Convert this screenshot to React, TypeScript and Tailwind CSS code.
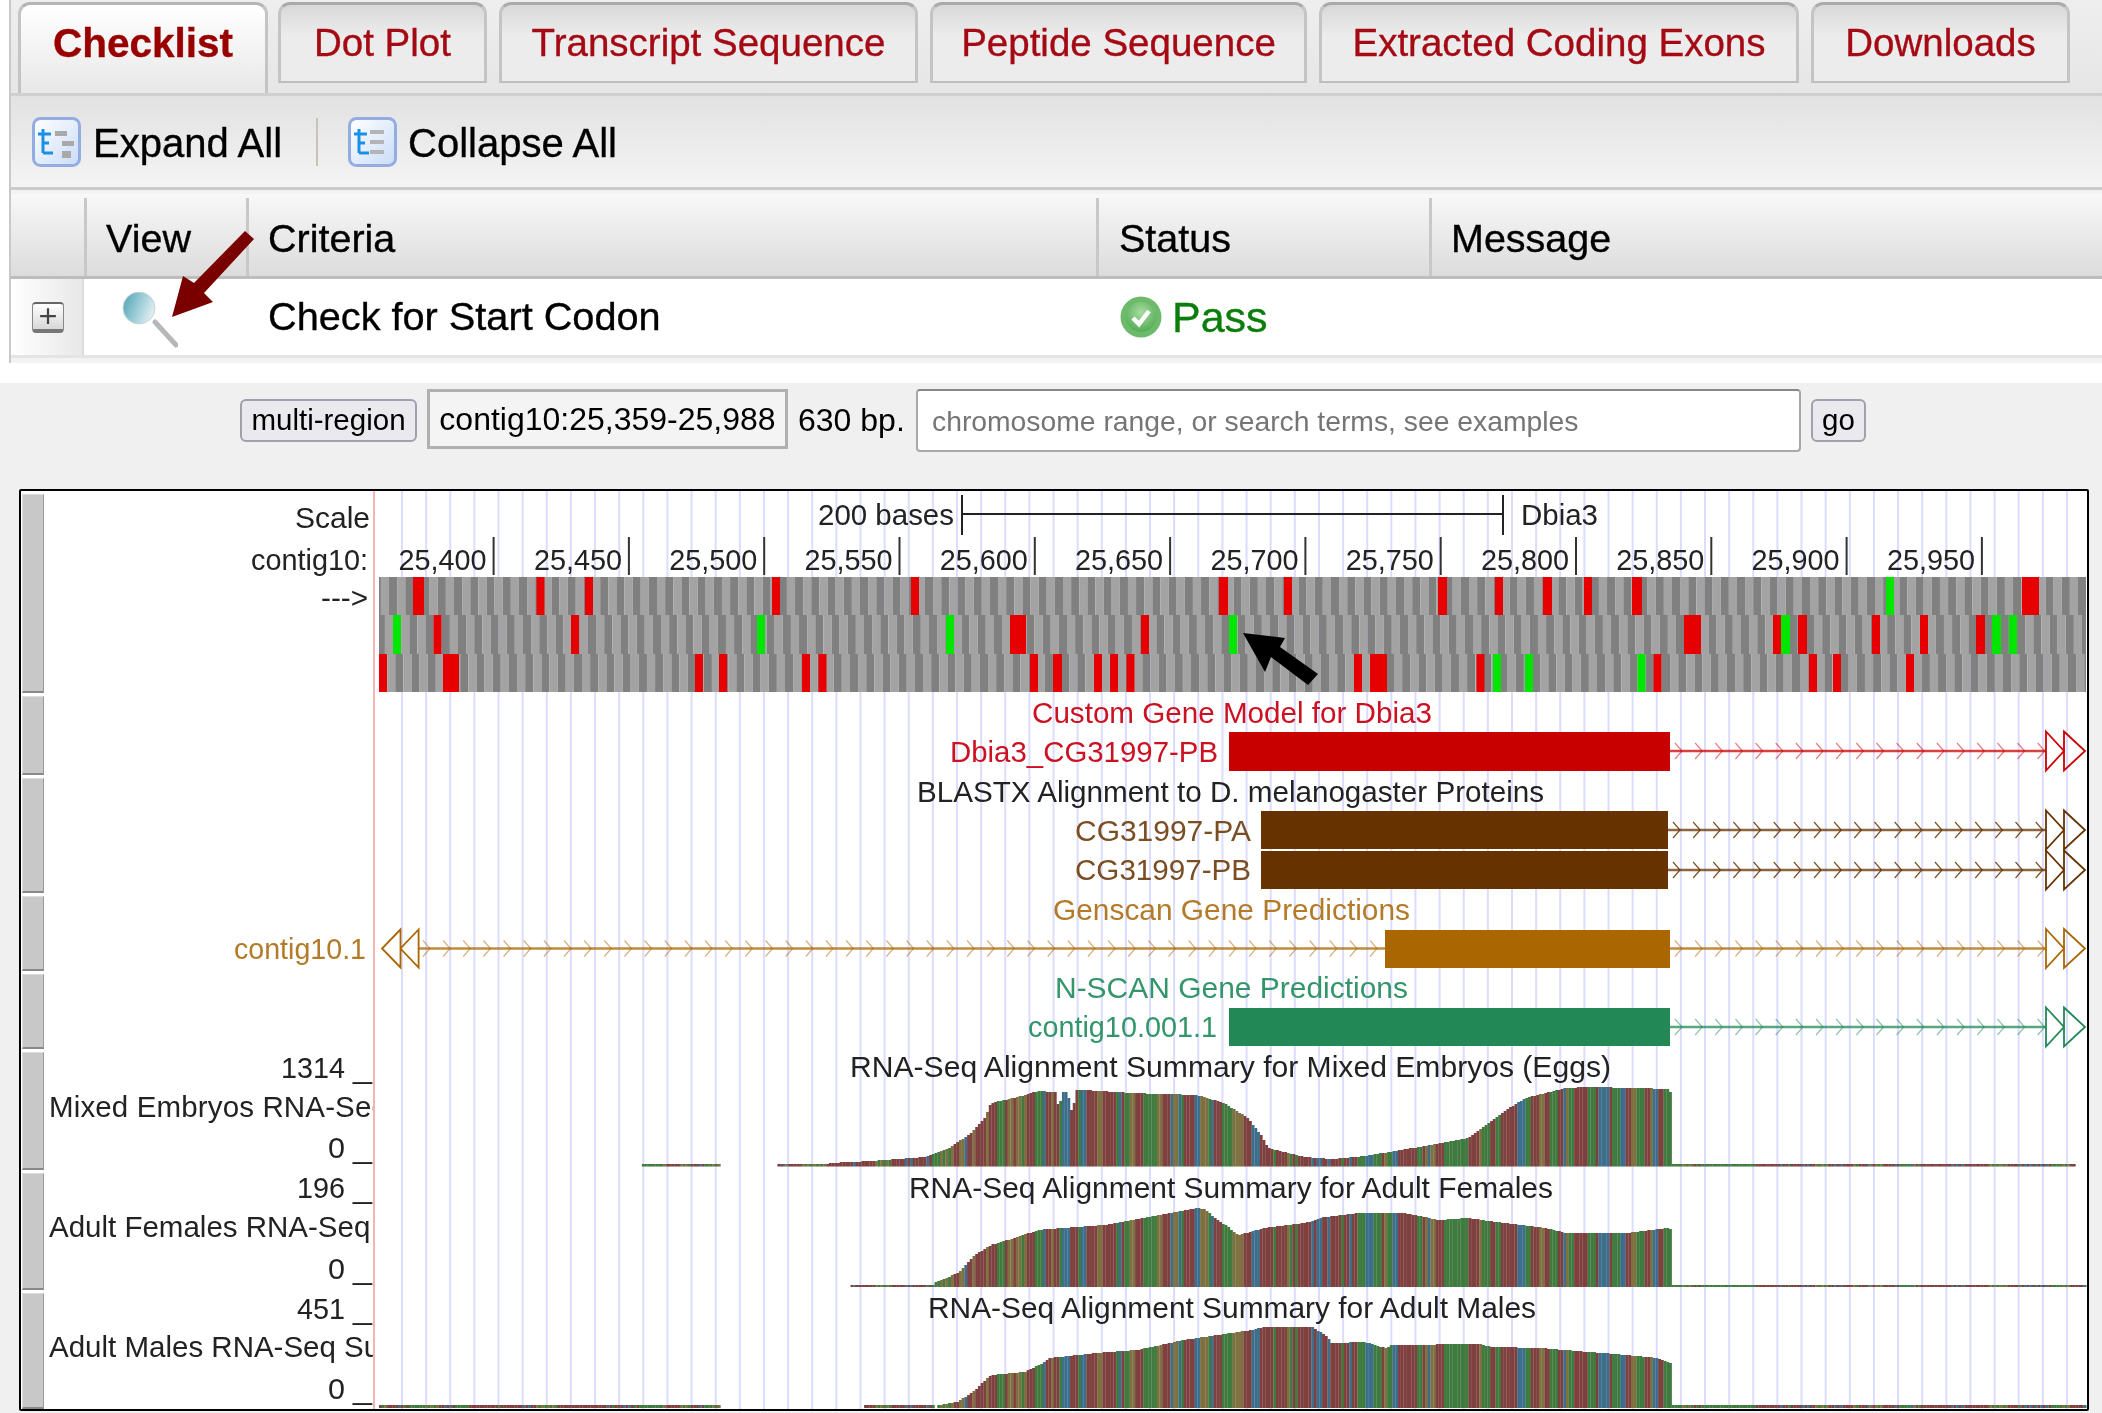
import React from "react";

const SIDE_BUTTONS = [199, 79, 115, 75, 75, 118, 117, 116];

const TABS = [
  { label: "Dot Plot", width: "w-[209px]" },
  { label: "Transcript Sequence", width: "w-[419px]" },
  { label: "Peptide Sequence", width: "w-[377px]" },
  { label: "Extracted Coding Exons", width: "w-[480px]" },
  { label: "Downloads", width: "w-[259px]" },
];

// red / green stop codons per reading frame, page pixels
const RED = "#e60000";
const GREEN = "#00e600";
const FRAMES = [
  {
    y: 577,
    h: 38,
    start: 372.8,
    marks: [
      [413, 11, RED], [536.5, 8, RED], [585, 8, RED], [772, 8, RED], [911, 8, RED],
      [1219, 9, RED], [1284, 8, RED], [1438, 9, RED], [1495, 8, RED], [1543, 9, RED],
      [1584, 8, RED], [1632, 10, RED], [1886, 8, GREEN], [2022, 17, RED],
    ],
  },
  {
    y: 615,
    h: 39,
    start: 376.8,
    marks: [
      [393, 8, GREEN], [433.5, 8, RED], [571, 8, RED], [757, 8, GREEN], [946, 8, GREEN],
      [1010, 16, RED], [1141, 8, RED], [1229, 8, GREEN], [1684, 17, RED], [1773, 8, RED],
      [1781, 9, GREEN], [1798, 9, RED], [1872, 8, RED], [1920, 8, RED], [1976, 9, RED],
      [1992, 9, GREEN], [2009, 8, GREEN],
    ],
  },
  {
    y: 654,
    h: 38,
    start: 379,
    marks: [
      [379, 8, RED], [443, 16, RED], [695, 8, RED], [719, 8, RED], [802, 8, RED],
      [818.5, 8, RED], [1030, 8, RED], [1053, 9, RED], [1094, 8, RED], [1110, 8, RED],
      [1126.5, 8, RED], [1354, 8, RED], [1370, 17, RED], [1476.5, 8, RED], [1493, 8, GREEN],
      [1525, 8, GREEN], [1637.5, 8, GREEN], [1653.5, 8, RED], [1809, 8, RED], [1833, 8, RED],
      [1906, 8, RED],
    ],
  },
] as { y: number; h: number; start: number; marks: [number, number, string][] }[];

type Pt = [number, number];

const COVERAGE: { base: number; segments: Pt[][] }[] = [
  {
    base: 1166.5,
    segments: [
      [[643, 1164], [720, 1164]],
      [[777, 1164], [830, 1164]],
      [
        [830, 1163], [871, 1161], [924, 1157], [951, 1147], [971, 1133], [985, 1118], [991, 1103],
        [1018, 1097], [1038, 1091], [1056, 1092], [1059, 1111], [1062, 1092], [1068, 1092], [1070, 1110],
        [1073, 1110], [1076, 1090], [1084, 1090], [1117, 1092], [1130, 1093], [1197, 1095], [1224, 1103],
        [1248, 1118], [1261, 1135], [1268, 1148], [1305, 1157], [1332, 1159], [1365, 1156], [1419, 1147],
        [1469, 1138], [1506, 1110], [1526, 1098], [1566, 1088], [1586, 1087], [1640, 1088], [1667, 1089], [1672, 1093],
      ],
      [[1673, 1164], [2075, 1164]],
    ],
  },
  {
    base: 1287,
    segments: [
      [[851, 1285], [934, 1285]],
      [
        [934, 1283], [958, 1273], [975, 1255], [991, 1245], [1018, 1237], [1038, 1230], [1050, 1229],
        [1104, 1225], [1150, 1217], [1197, 1208], [1205, 1209], [1214, 1217], [1228, 1227], [1238, 1235],
        [1265, 1228], [1305, 1223], [1325, 1217], [1358, 1213], [1405, 1213], [1439, 1220], [1466, 1218],
        [1506, 1223], [1546, 1228], [1566, 1233], [1627, 1233], [1667, 1228], [1672, 1230],
      ],
      [[1673, 1285], [2087, 1285]],
    ],
  },
  {
    base: 1408,
    segments: [
      [[379, 1405], [720, 1405]],
      [[864, 1405], [934, 1405]],
      [
        [938, 1405], [958, 1402], [975, 1390], [991, 1375], [1025, 1372], [1045, 1362], [1050, 1358],
        [1097, 1353], [1137, 1350], [1184, 1340], [1251, 1330], [1265, 1327], [1312, 1327], [1325, 1335],
        [1332, 1343], [1365, 1342], [1385, 1348], [1392, 1345], [1479, 1344], [1493, 1347], [1540, 1348],
        [1627, 1355], [1657, 1358], [1672, 1364],
      ],
      [[1673, 1405], [2087, 1405]],
    ],
  },
];

const BASE_STEP = 2.71;
const BASE_COLORS: Record<string, string> = { R: "#7f4140", G: "#3f7a3e", B: "#3d6f8c", Y: "#7e7040" };

// base stripes read off the reference: end of run (in px from 960 / 1320) + base
const RUNS_A =
  "5Y 7B 12R 15Y 22R 23G 27R 29Y 36R 44G 47R 52Y 55R 61Y 64G 68Y 74R 84G 86B 92R 94Y 99R 102G 109B 117R 121G 125B 138R 142Y 155R 159G 162B 164R 169G 176Y 184R 197G 202Y 210R 213B 219Y 221B 225G 235R 239B 247Y 251G 255B 263R 274G 284Y 291R 299B 312R 317G 327R 330Y 333G 336R 339G 350R 353B 358R 361B 367R 369B 380R";
const RUNS_B =
  "3B 6G 9B 22R 25G 30R 33B 38R 45G 53B 62G 65R 68Y 72G 78B 97R 101G 105R 109Y 111B 117Y 124R 131G 133B 148G 153R 155Y 159R 163Y 171G 176R 181G 196R 204B 210G 220R 225Y 229R 238G 242R 246B 250Y 254G 267R 277G 279R 288B 292R 300G 306B 312R 317Y 324G 329R 332Y 339B 343R 352G";

function parseRuns(runs: string, origin: number) {
  return runs.split(" ").map((run) => ({
    end: origin + parseInt(run, 10),
    color: BASE_COLORS[run[run.length - 1]],
  }));
}

const STRIPES = [...parseRuns(RUNS_A, 960), ...parseRuns(RUNS_B, 1320)];

// flat parts of the tracks are just a noisy mix of the four bases
function makeNoise() {
  const colors: string[] = [];
  const letters = ["R", "G", "R", "B", "R", "Y", "G", "R"];
  let seed = 4711;
  for (let i = 0; i < 640; i++) {
    seed = (seed * 1103515245 + 12345) & 0x7fffffff;
    colors.push(BASE_COLORS[letters[(seed >> 8) % letters.length]]);
  }
  return colors;
}

const NOISE = makeNoise();

function baseColor(x: number) {
  if (x >= 960 && x < 1672) {
    const stripe = STRIPES.find((s) => x < s.end);
    if (stripe) return stripe.color;
  }
  return NOISE[Math.floor((x - 379) / BASE_STEP)];
}

function heightAt(points: Pt[], x: number) {
  for (let i = 1; i < points.length; i++) {
    if (x <= points[i][0]) {
      const [x0, y0] = points[i - 1];
      const [x1, y1] = points[i];
      return y0 + ((y1 - y0) * (x - x0)) / (x1 - x0 || 1);
    }
  }
  return points[points.length - 1][1];
}

const T: React.FC<{
  x: number;
  y: number;
  w?: number;
  fill?: string;
  clip?: boolean;
  className?: string;
  children: React.ReactNode;
}> = ({ x, y, w, fill = "#222", clip, className, children }) => (
  <text
    x={x}
    y={y}
    fill={fill}
    className={className}
    textLength={w}
    lengthAdjust={w ? "spacingAndGlyphs" : undefined}
    clipPath={clip ? "url(#labels)" : undefined}
  >
    {children}
  </text>
);

const GeneLine: React.FC<{ y: number; from: number; to: number; color: string; soft?: boolean; arrows?: boolean }> = ({
  y,
  from,
  to,
  color,
  soft,
  arrows = true,
}) => {
  const chevrons: number[] = [];
  for (let x = from + 8; x < to - 4; x += 20.15) chevrons.push(x);
  const h = 19.5;
  return (
    <g fill="none" stroke={color}>
      <path d={`M${from} ${y}H${to}`} strokeWidth="2.5" opacity="0.75" />
      {chevrons.map((x) => (
        <path
          key={x}
          d={`M${x - 3} ${y - 8}L${x + 4} ${y}L${x - 3} ${y + 8}`}
          strokeWidth="1.2"
          opacity={soft ? 0.5 : 0.85}
        />
      ))}
      {arrows && (
        <>
          <path d={`M2046 ${y - h}L2064 ${y}L2046 ${y + h}Z`} strokeWidth="1.8" />
          <path d={`M2064 ${y - h}L2085 ${y}L2064 ${y + h}Z`} strokeWidth="1.8" />
        </>
      )}
    </g>
  );
};

const TrackCanvas: React.FC = () => {
  const grid: number[] = [];
  for (let x = 402; x < 2087; x += 24.13) grid.push(x);
  const ticks = ["25,400", "25,450", "25,500", "25,550", "25,600", "25,650", "25,700", "25,750", "25,800", "25,850", "25,900", "25,950"];

  return (
    <svg viewBox="46 491 2041 918" className="w-[2041px] h-[918px] shrink-0 bg-white text-[29.5px]">
      <defs>
        <clipPath id="labels">
          <rect x="46" y="491" width="327" height="918" />
        </clipPath>
      </defs>

      {grid.map((x) => (
        <rect key={x} x={x - 1} y="491" width="2" height="918" fill="#dcdcff" />
      ))}
      <rect x="373" y="491" width="2" height="918" fill="#f4b4b4" />

      {/* scale and ruler */}
      <T x={295} y={528} w={75}>Scale</T>
      <T x={818} y={525} w={136}>200 bases</T>
      <path d="M962 495V535M962 514H1503M1503 495V535" stroke="#222" strokeWidth="2" fill="none" />
      <T x={1521} y={525} w={77}>Dbia3</T>
      <T x={251} y={570} w={117}>contig10:</T>
      {ticks.map((label, i) => {
        const tick = 493.6 + 135.3 * i;
        return (
          <g key={label}>
            <T x={tick - 95} y={569.5} w={88}>{label}</T>
            <rect x={tick - 1} y="537" width="2" height="38" fill="#333" />
          </g>
        );
      })}
      <T x={321} y={608} w={47}>---&gt;</T>

      {/* three frame translation */}
      {FRAMES.map((frame) => {
        const stripes: number[] = [];
        for (let x = frame.start; x < 2086; x += 8.12) stripes.push(x);
        return (
          <g key={frame.y}>
            {stripes.map((x, i) => {
              const left = Math.max(x, 379);
              return (
                <rect
                  key={x}
                  x={left}
                  y={frame.y}
                  width={Math.min(x + 8.12, 2086) - left}
                  height={frame.h}
                  fill={i % 2 === 0 ? "#808080" : "#a3a3a3"}
                />
              );
            })}
            {frame.marks.map(([x, w, color]) => (
              <rect key={x} x={x} y={frame.y} width={w} height={frame.h} fill={color} />
            ))}
          </g>
        );
      })}

      {/* gene models */}
      <T x={1032} y={723} w={400} fill="#cc1122">Custom Gene Model for Dbia3</T>
      <T x={950} y={762} w={268} fill="#cc1122">Dbia3_CG31997-PB</T>
      <GeneLine y={751} from={1670} to={2046} color="#cc0000" soft />
      <rect x="1229" y="732" width="441" height="39" fill="#c80000" />

      <T x={917} y={802} w={627}>BLASTX Alignment to D. melanogaster Proteins</T>
      <T x={1075} y={841} w={176} fill="#7a4d22">CG31997-PA</T>
      <T x={1075} y={880} w={176} fill="#7a4d22">CG31997-PB</T>
      <GeneLine y={830} from={1668} to={2046} color="#663300" />
      <GeneLine y={870} from={1668} to={2046} color="#663300" />
      <rect x="1261" y="811" width="407" height="38" fill="#663300" />
      <rect x="1261" y="851" width="407" height="38" fill="#663300" />

      <T x={1053} y={920} w={357} fill="#b37a28">Genscan Gene Predictions</T>
      <T x={234} y={959} w={132} fill="#b37a28">contig10.1</T>
      <GeneLine y={948.5} from={1670} to={2046} color="#aa6600" soft />
      <GeneLine y={948.5} from={418} to={1385} color="#aa6600" soft arrows={false} />
      <path d="M400.5 929.5L382 948.5L400.5 967.5ZM418.6 929.5L400.5 948.5L418.6 967.5Z" fill="none" stroke="#aa6600" strokeWidth="1.8" />
      <rect x="1385" y="930" width="285" height="38" fill="#aa6600" />

      <T x={1055} y={998} w={353} fill="#33966a">N-SCAN Gene Predictions</T>
      <T x={1028} y={1037} w={189} fill="#33966a">contig10.001.1</T>
      <GeneLine y={1027} from={1670} to={2046} color="#228855" soft />
      <rect x="1229" y="1008" width="441" height="38" fill="#228855" />

      {/* coverage */}
      {COVERAGE.map((track) =>
        track.segments.map((points) => {
          const columns: number[] = [];
          for (let x = 379 + BASE_STEP / 2; x < 2087; x += BASE_STEP) {
            if (x >= points[0][0] && x <= points[points.length - 1][0]) columns.push(x);
          }
          return columns.map((x) => {
            const top = Math.round(heightAt(points, x));
            return (
              <rect
                key={`${track.base}-${x}`}
                x={x - BASE_STEP / 2}
                y={top}
                width={BASE_STEP + 0.2}
                height={track.base - top}
                fill={baseColor(x)}
              />
            );
          });
        })
      )}

      <T x={850} y={1077} w={761}>RNA-Seq Alignment Summary for Mixed Embryos (Eggs)</T>
      <T x={281} y={1078} w={64}>1314</T>
      <T x={353} y={1078} w={19}>_</T>
      <T x={49} y={1117} clip className="tracking-[0.14px]">Mixed Embryos RNA-Seq Summary</T>
      <T x={328} y={1158} w={17}>0</T>
      <T x={353} y={1158} w={19}>_</T>

      <T x={909} y={1198} w={644}>RNA-Seq Alignment Summary for Adult Females</T>
      <T x={297} y={1198} w={48}>196</T>
      <T x={353} y={1198} w={19}>_</T>
      <T x={49} y={1237} clip>Adult Females RNA-Seq Summary</T>
      <T x={328} y={1279} w={17}>0</T>
      <T x={353} y={1279} w={19}>_</T>

      <T x={928} y={1318} w={608}>RNA-Seq Alignment Summary for Adult Males</T>
      <T x={297} y={1319} w={48}>451</T>
      <T x={353} y={1319} w={19}>_</T>
      <T x={49} y={1357} clip>Adult Males RNA-Seq Summary</T>
      <T x={328} y={1399} w={17}>0</T>
      <T x={353} y={1399} w={19}>_</T>

      {/* annotation arrow */}
      <path d="M1243 633L1285 638L1280 647L1318 674L1308 685L1271 657L1265 672Z" fill="#000" />
    </svg>
  );
};

const TreeIcon: React.FC<{ expanded?: boolean }> = ({ expanded }) => (
  <svg viewBox="0 0 49 50" className="w-[49px] h-[50px] shrink-0">
    <defs>
      <linearGradient id={expanded ? "treeA" : "treeB"} x1="0" y1="0" x2="1" y2="1">
        <stop offset="0" stopColor="#ffffff" />
        <stop offset="1" stopColor="#c9dcf8" />
      </linearGradient>
    </defs>
    <rect x="1.5" y="1.5" width="46" height="47" rx="7" fill={`url(#${expanded ? "treeA" : "treeB"})`} stroke="#93ace2" strokeWidth="3" />
    <path d="M6 17H19M11 12V36M11 26H17M11 36H21" fill="none" stroke="#1b8fe6" strokeWidth="3" />
    {expanded ? (
      <path d="M23 14h12v5H23zM30 24h12v5H30zM30 34h9v7h-9z" fill="#a9a9a9" />
    ) : (
      <path d="M22 13h14v4H22zM22 23h14v4H22zM22 33h14v4H22z" fill="#b4b4b4" />
    )}
  </svg>
);

const PlusIcon: React.FC = () => (
  <div className="flex h-[31px] w-[32px] items-center justify-center rounded-[4px] border-x border-t-2 border-b-[4px] border-x-[#888] border-t-[#666] border-b-[#777] bg-linear-to-b from-white to-[#d8d8d8]">
    <svg viewBox="0 0 16 16" className="w-[18px] h-[18px]">
      <path d="M8 1V15M1 8H15" stroke="#444" strokeWidth="2" />
    </svg>
  </div>
);

const Magnifier: React.FC = () => (
  <svg viewBox="0 0 56 56" className="w-[56px] h-[56px]">
    <defs>
      <linearGradient id="lens" x1="0" y1="0.3" x2="1" y2="0.7">
        <stop offset="0" stopColor="#58a9ba" />
        <stop offset="1" stopColor="#e8f3f6" />
      </linearGradient>
    </defs>
    <path d="M33 30L54 53" stroke="#b4b8b8" strokeWidth="5" strokeLinecap="round" />
    <circle cx="17" cy="16" r="16" fill="url(#lens)" stroke="#c9d4d6" strokeWidth="1" />
  </svg>
);

const PassIcon: React.FC = () => (
  <svg viewBox="0 0 42 44" className="w-[42px] h-[44px] shrink-0">
    <defs>
      <radialGradient id="pass" cx="0.5" cy="0.35" r="0.7">
        <stop offset="0" stopColor="#a8dca0" />
        <stop offset="1" stopColor="#4da84f" />
      </radialGradient>
    </defs>
    <circle cx="21" cy="22" r="20.5" fill="#6dbb6a" />
    <circle cx="21" cy="22" r="15" fill="url(#pass)" />
    <path d="M13 23L19 29L29 16" fill="none" stroke="#fff" strokeWidth="4.5" />
  </svg>
);

const App: React.FC = () => {
  return (
    <div className="h-[1413px] w-[2102px] overflow-hidden bg-[#f0f0f0] font-['Liberation_Sans',sans-serif] blur-[0.7px]">
      {/* checklist panel */}
      <div className="relative h-[383px] bg-white [-webkit-text-stroke:0.35px]">
        <div className="ml-[9px] h-[363px] border-l-2 border-[#c9c9c9] bg-[#f3f3f3]">
          <div className="flex h-[96px] gap-[12px] border-b-[3px] border-[#cfcfcf] bg-linear-to-b from-[#eeeeee] to-[#e6e6e6] pl-[7px] pt-[2px]">
            <div className="-mr-[2px] flex h-[91px] w-[250px] items-start justify-center rounded-t-[12px] border-x-[3px] border-t-[3px] border-x-[#c4c4c4] border-t-[#b4b4b4] bg-linear-to-b from-white to-[#e8e8e8] pt-[15px] text-[40.5px] leading-[46px] font-bold text-[#990000]">
              Checklist
            </div>
            {TABS.map((tab) => (
              <div
                key={tab.label}
                className={`flex h-[81px] ${tab.width} items-start justify-center rounded-t-[12px] border-x-[3px] border-t-[3px] border-b-[2px] border-x-[#c4c4c4] border-t-[#aaaaaa] border-b-[#bdbdbd] bg-linear-to-b from-[#d8d8d8] to-[#ececec] to-40% pt-[15px] text-[38.5px] leading-[46px] text-[#a50a14]`}
              >
                {tab.label}
              </div>
            ))}
          </div>

          <div className="flex h-[94px] items-center border-b-[3px] border-[#cbcbcb] bg-linear-to-b from-[#e2e2e2] to-[#f4f4f4] pl-[21px] text-[40px] text-black">
            <TreeIcon expanded />
            <span className="ml-[12px] w-[223px] pt-[2px]">Expand All</span>
            <div className="h-[48px] w-[2px] bg-[#c8c3b4]" />
            <div className="ml-[30px]">
              <TreeIcon />
            </div>
            <span className="ml-[11px] pt-[2px]">Collapse All</span>
          </div>

          <div className="mt-[4px] flex h-[85px] border-b-[3px] border-[#bdbdbd] bg-linear-to-b from-[#f8f8f8] to-[#dcdcdc] pt-[4px] text-[39.5px] leading-[80px] text-black">
            <div className="w-[73px]" />
            <div className="w-[162px] border-l-[3px] border-[#c8c8c8] pl-[19px]">View</div>
            <div className="w-[850px] border-l-[3px] border-[#c8c8c8] pl-[19px]">Criteria</div>
            <div className="w-[333px] border-l-[3px] border-[#c8c8c8] pl-[20px]">Status</div>
            <div className="flex-1 border-l-[3px] border-[#c8c8c8] pl-[19px]">Message</div>
          </div>

          <div className="flex h-[79px] border-b-[3px] border-[#e4e4e4] bg-white text-[39.7px] text-black">
            <div className="flex w-[73px] items-center border-r-[2px] border-[#dcdcdc] bg-linear-to-r from-white to-[#e8e8e8] pl-[21px]">
              <PlusIcon />
            </div>
            <div className="flex w-[162px] items-start pl-[38px] pt-[13px]">
              <Magnifier />
            </div>
            <div className="flex w-[850px] items-center pl-[22px]">Check for Start Codon</div>
            <div className="flex items-center gap-[10px] pl-[24px] text-[43px] text-[#0b7d0b]">
              <PassIcon />
              Pass
            </div>
          </div>
        </div>

        <svg viewBox="0 0 90 95" className="absolute left-[170px] top-[227px] w-[90px] h-[95px]">
          <path d="M75 4L84 12L34 66L43 75L2 90L13 49L24 56Z" fill="#7a0000" />
        </svg>
      </div>

      {/* position search bar */}
      <div className="flex h-[106px] items-start pl-[240px] pt-[6px] text-[29.5px] text-black">
        <div className="mt-[10px] flex h-[43px] w-[177px] items-center justify-center rounded-[6px] border-2 border-[#a0a0ae] bg-[#e9e9ee]">
          multi-region
        </div>
        <div className="ml-[10px] flex h-[60px] w-[361px] items-center justify-center border-[3px] border-[#b0b0b0] bg-[#f4f4f4] text-[32px]">
          contig10:25,359-25,988
        </div>
        <div className="ml-[10px] w-[118px] pt-[7px] text-[32px]">630 bp.</div>
        <div className="flex h-[63px] w-[885px] items-center rounded-[4px] border-[2px] border-[#a8a8a8] border-t-[#888] bg-white pl-[14px] pt-[2px] text-[28.3px] text-[#757575]">
          chromosome range, or search terms, see examples
        </div>
        <div className="ml-[10px] mt-[10px] flex h-[43px] w-[55px] items-center justify-center rounded-[6px] border-2 border-[#a0a0ae] bg-[#e9e9ee]">
          go
        </div>
      </div>

      {/* browser image */}
      <div className="ml-[19px] flex h-[922px] w-[2070px] rounded-[2px] border-2 border-black bg-white">
        <div className="ml-px mr-[2px] flex w-[22px] shrink-0 flex-col gap-[3px] pt-[3px]">
          {SIDE_BUTTONS.map((height, i) => (
            <div
              key={i}
              className="border-r border-b-2 border-t border-l border-r-[#999] border-b-[#888] border-t-[#ddd] border-l-[#ddd] bg-[#c8c8c8]"
              style={{ height }}
            />
          ))}
        </div>
        <TrackCanvas />
      </div>
    </div>
  );
};

export default App;
